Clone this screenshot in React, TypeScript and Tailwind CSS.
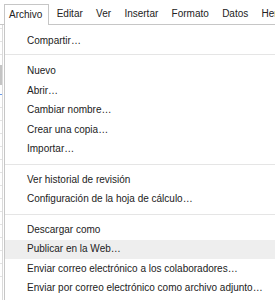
import React from "react";

const barItems = ["Editar", "Ver", "Insertar", "Formato", "Datos", "Herramientas"];

type Entry = { label?: string; sep?: "first" | "normal"; active?: boolean };

const entries: Entry[] = [
  { label: "Compartir…" },
  { sep: "first" },
  { label: "Nuevo" },
  { label: "Abrir…" },
  { label: "Cambiar nombre…" },
  { label: "Crear una copia…" },
  { label: "Importar…" },
  { sep: "normal" },
  { label: "Ver historial de revisión" },
  { label: "Configuración de la hoja de cálculo…" },
  { sep: "normal" },
  { label: "Descargar como" },
  { label: "Publicar en la Web…", active: true },
  { label: "Enviar correo electrónico a los colaboradores…" },
  { label: "Enviar por correo electrónico como archivo adjunto…" },
];

export default function App() {
  return (
    <div className="w-[275px] h-[300px] overflow-hidden bg-white text-[10px] leading-[12px] text-[#222] font-['Liberation_Sans',Arial,sans-serif] whitespace-nowrap">
      {/* menu bar */}
      <div className="flex h-[25px] items-end gap-[1.3px] border-b border-[#c6c6c6] pl-[4px]">
        <div className="relative z-10 -mb-px flex h-[21px] items-center border border-b-0 border-[#c6c6c6] bg-white pb-px pl-[4px] pr-[6px]">
          Archivo
        </div>
        {barItems.map((t) => (
          <div key={t} className="flex h-[20px] items-center px-[6px]">
            {t}
          </div>
        ))}
      </div>

      <div className="flex h-[275px]">
        {/* spreadsheet behind, left edge */}
        <div className="w-[4px] shrink-0">
          <div className="flex h-full w-[3px] flex-col border-r border-[#dadada]">
            <div className="h-[4px] border-b border-[#e3e3e3]" />
            <div className="h-[13px] border-b border-[#e3e3e3]" />
            <div className="h-[13px] border-b border-[#e3e3e3]" />
            <div className="h-[10px]" />
            <div className="h-[20px] bg-[#c4c4c4]" />
            <div className="h-[9px]" />
            <div className="h-[1px] bg-[#6a9ae8]" />
            <div className="h-[13px] border-b border-[#e3e3e3]" />
            <div className="h-[13px] border-b border-[#e3e3e3]" />
            <div className="h-[13px] border-b border-[#e3e3e3]" />
            <div className="h-[13px] border-b border-[#e3e3e3]" />
            <div className="h-[13px] border-b border-[#e3e3e3]" />
            <div className="h-[13px] border-b border-[#e3e3e3]" />
            <div className="h-[13px] border-b border-[#e3e3e3]" />
            <div className="h-[13px] border-b border-[#e3e3e3]" />
            <div className="h-[13px] border-b border-[#e3e3e3]" />
            <div className="h-[13px] border-b border-[#e3e3e3]" />
            <div className="h-[13px] border-b border-[#e3e3e3]" />
            <div className="h-[13px] border-b border-[#e3e3e3]" />
            <div className="h-[13px] border-b border-[#e3e3e3]" />
            <div className="h-[13px] border-b border-[#e3e3e3]" />
          </div>
        </div>

        {/* dropdown */}
        <div className="flex flex-1 flex-col border-l border-[#c6c6c6] bg-white pt-[6px]">
          {entries.map((e, i) =>
            e.sep ? (
              <div
                key={i}
                className={
                  e.sep === "first"
                    ? "mt-[3px] mb-[7px] h-px shrink-0 bg-[#e5e5e5]"
                    : "my-[5px] h-px shrink-0 bg-[#e5e5e5]"
                }
              />
            ) : (
              <div
                key={i}
                className={
                  "flex h-[19.5px] shrink-0 items-center pl-[22px] " +
                  (e.active ? "bg-[#eeeeee]" : "")
                }
              >
                {e.label}
              </div>
            )
          )}
        </div>
      </div>
    </div>
  );
}
